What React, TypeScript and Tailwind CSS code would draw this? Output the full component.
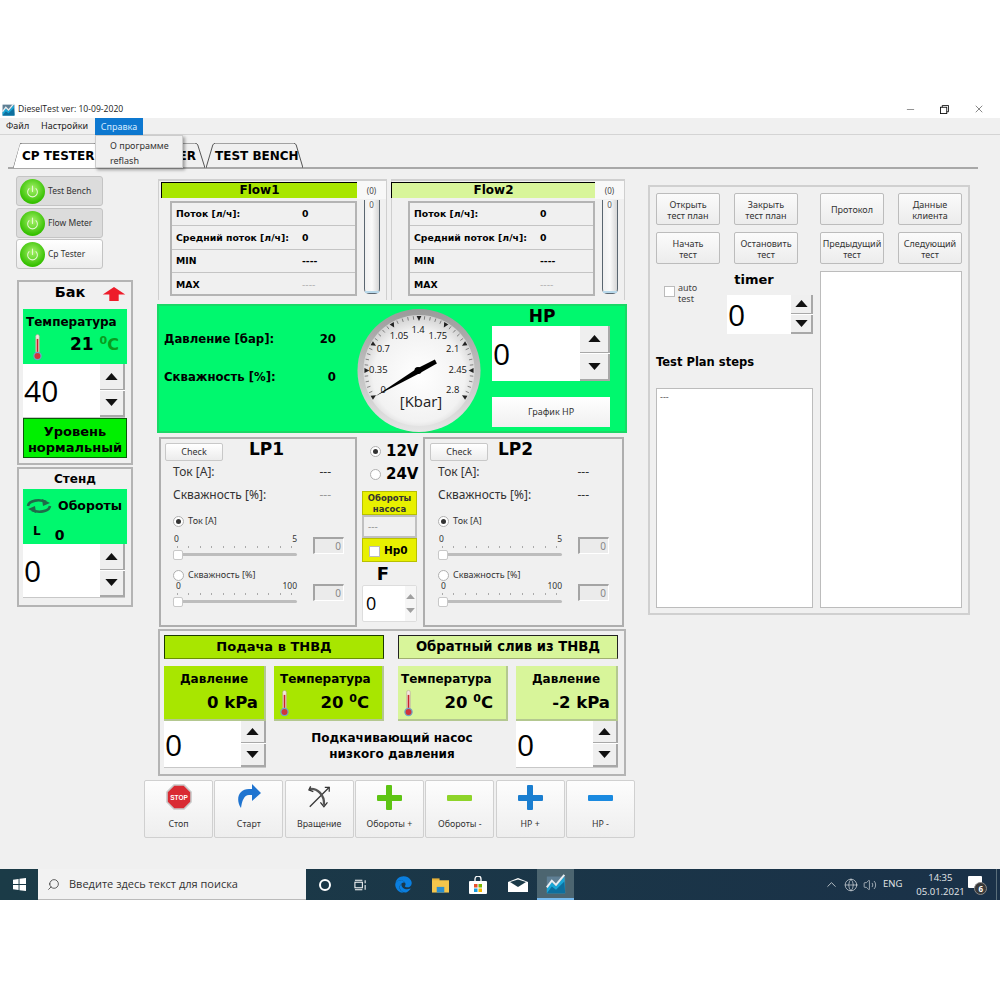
import React from "react";
import { ChevronUp, Globe, Minus, Power, Search, Volume2, X } from "lucide-react";
import { FaEdge } from "react-icons/fa";

const BOLD = "font-['DejaVu_Sans'] font-bold text-black";
const LIME = "bg-[#a8e600]";
const PALE = "bg-[#d8f59a]";
const MINT = "bg-[#00f86e]";

function ChartLogo({ className }: { className: string }) {
  return (
    <svg viewBox="0 0 24 24" className={className}>
      <rect x="1" y="3" width="22" height="20" fill="#5f7f94" />
      <path d="M1 23 L1 17 L7 10 L12 15 L22 3 L23 23 Z" fill="#19a6d6" />
      <path d="M1 23 L7 15 L12 19 L22 9 L23 23 Z" fill="#0d6f9e" />
      <path d="M1 16 L7 8 L12 13 L22 1" fill="none" stroke="#e8eef2" strokeWidth="2.4" />
    </svg>
  );
}

function Arrow({ down = false, muted = false }: { down?: boolean; muted?: boolean }) {
  return (
    <svg viewBox="0 0 14 8" className={muted ? "w-[9px] h-[5px]" : "w-[13px] h-[7px]"}>
      <polygon points={down ? "0,0 14,0 7,8" : "0,8 14,8 7,0"} fill={muted ? "#a0a0a0" : "#111"} />
    </svg>
  );
}

function Spin({ value, className, text = "text-[30px]", arrows = "w-[25px]" }: { value: string; className: string; text?: string; arrows?: string }) {
  return (
    <div className={`flex bg-white border-b border-[#c8c8c8] ${className}`}>
      <div className={`flex-1 flex items-center pl-[1px] font-['Open_Sans'] text-black ${text}`}>{value}</div>
      <div className={`${arrows} flex flex-col gap-[1px] bg-white`}>
        <div className="flex-1 flex items-center justify-center bg-[#efefef] border-r-2 border-b border-[#a8a8a8]">
          <Arrow />
        </div>
        <div className="flex-1 flex items-center justify-center bg-[#efefef] border-r-2 border-b-2 border-[#a8a8a8]">
          <Arrow down />
        </div>
      </div>
    </div>
  );
}

function Thermometer() {
  return (
    <svg viewBox="0 0 10 30" className="w-[9px] h-[28px]">
      <rect x="3" y="1" width="4" height="21" rx="2" fill="#f4e7dc" stroke="#b0a090" strokeWidth="0.6" />
      <rect x="4.1" y="6" width="1.8" height="18" fill="#c8242c" />
      <circle cx="5" cy="25" r="4" fill="#d0343c" stroke="#6ea6c8" strokeWidth="1.4" />
    </svg>
  );
}

function PowerButton({ label, active = false }: { label: string; active?: boolean }) {
  return (
    <div
      className={`w-[87px] h-[30px] flex items-center rounded-[3px] border border-[#c4c4c4] pl-[3px] gap-[3px] ${active ? "bg-linear-to-b from-white to-[#ececec]" : "bg-[#dcdcdc]"}`}
    >
      <div className="w-[25px] h-[25px] rounded-full flex items-center justify-center bg-[radial-gradient(circle_at_50%_40%,#a6f26a,#35c000_70%)]">
        <Power size={13} strokeWidth={2} className="text-[#e4f7d0]" />
      </div>
      <span className="text-[8.5px] text-[#333]">{label}</span>
    </div>
  );
}

function Tab({ label, className, pad }: { label: string; className: string; pad: string }) {
  return (
    <div className={`relative h-[25px] ${className}`}>
      <svg viewBox="0 0 100 25" preserveAspectRatio="none" className="absolute inset-0 w-full h-full">
        <path d="M0 25 L7 2 Q8 0 10 0 L90 0 Q92 0 93 2 L100 25" fill="none" stroke="#555" strokeWidth="1" vectorEffect="non-scaling-stroke" />
      </svg>
      <span className={`relative block whitespace-nowrap text-[12px] leading-[27px] ${BOLD} ${pad}`}>{label}</span>
    </div>
  );
}

function FlowRow({ label, value, muted = false }: { label: string; value: string; muted?: boolean }) {
  return (
    <div className="h-[23.4px] flex items-center border-b border-[#c4c4c4] last:border-b-0 pl-[4px] text-[9.3px]">
      <span className={`w-[126px] ${BOLD}`}>{label}</span>
      <span className={`${BOLD} ${muted ? "!text-[#aaaaaa] !font-normal" : ""}`}>{value}</span>
    </div>
  );
}

function FlowPanel({ title, color, className, barClass, indent }: { title: string; color: string; className: string; barClass: string; indent: string }) {
  return (
    <div className={`h-[121px] flex border-t-2 border-x border-[#cfcfcf] ${className}`}>
      <div className={barClass}>
        <div className={`mt-[1px] h-[16px] border-t border-l border-black text-center text-[12px] leading-[15px] ${color} ${BOLD}`}>{title}</div>
        <div className={`mt-[3px] h-[95px] border-2 border-[#b4b4b4] ${indent}`}>
          <FlowRow label="Поток [л/ч]:" value="0" />
          <FlowRow label="Средний поток [л/ч]:" value="0" />
          <FlowRow label="MIN" value="----" />
          <FlowRow label="MAX" value="----" muted />
        </div>
      </div>
      <div className="flex-1 flex flex-col items-center">
        <div className="w-full h-[18px] bg-[#f8f8f8] pt-[2px] text-center text-[8px] leading-[16px] text-[#444]">(0)</div>
        <div className="w-[16px] h-[94px] mt-[1px] flex flex-col justify-between border-x border-b border-[#5a6670] rounded-b-[5px] bg-linear-to-r from-[#f0f0f0] via-[#fafafa] to-[#d6d6d6] text-center text-[8px] leading-[10px] text-[#555]">
          <span>0</span>
          <div className="h-[2px] bg-[#b8d8ea]" />
        </div>
      </div>
    </div>
  );
}

function Gauge() {
  const labels: [string, number, number][] = [
    ["0", 29, 85],
    ["0.35", 24, 65],
    ["0.7", 29, 44],
    ["1.05", 45, 31],
    ["1.4", 64, 25],
    ["1.75", 84, 31],
    ["2.1", 99, 44],
    ["2.45", 104, 65],
    ["2.8", 99, 85],
  ];
  const ticks = [];
  for (let i = 0; i <= 40; i++) {
    const a = ((-120 + i * 6) * Math.PI) / 180;
    const major = i % 5 === 0;
    const s = Math.sin(a);
    const c = Math.cos(a);
    ticks.push(
      major ? (
        <polygon
          key={i}
          points={`${65 + s * 55 - c * 2.4},${65 - c * 55 - s * 2.4} ${65 + s * 55 + c * 2.4},${65 - c * 55 + s * 2.4} ${65 + s * 50},${65 - c * 50}`}
          fill="#222"
        />
      ) : (
        <line key={i} x1={65 + s * 55} y1={65 - c * 55} x2={65 + s * 51.5} y2={65 - c * 51.5} stroke="#555" strokeWidth="0.7" />
      ),
    );
  }
  return (
    <svg viewBox="0 0 130 130" className="w-[130px] h-[129px] shrink-0">
      <defs>
        <linearGradient id="bezel" x1="0" y1="0" x2="0" y2="1">
          <stop offset="0" stopColor="#9a9a9a" />
          <stop offset="1" stopColor="#e6e6e6" />
        </linearGradient>
        <radialGradient id="dial" cx="0.5" cy="0.55" r="0.55">
          <stop offset="0" stopColor="#ffffff" />
          <stop offset="0.75" stopColor="#f2f2f2" />
          <stop offset="1" stopColor="#cfcfcf" />
        </radialGradient>
      </defs>
      <circle cx="65" cy="65" r="62" fill="url(#bezel)" />
      <circle cx="65" cy="65" r="56" fill="url(#dial)" />
      {ticks}
      {labels.map(([t, x, y]) => (
        <text key={t} x={x} y={y} textAnchor="middle" dominantBaseline="middle" fontSize="9.5" fontFamily="'Open Sans'" fill="#111">
          {t}
        </text>
      ))}
      <text x="67" y="98" textAnchor="middle" dominantBaseline="middle" fontSize="15" fontFamily="'Open Sans'" fill="#222">
        [Kbar]
      </text>
      <polygon points="21,91 63,63 81,54 83,58 67,67" fill="#000" />
      <circle cx="64" cy="65" r="3.6" fill="#000" />
    </svg>
  );
}

function Radio({ checked = false }: { checked?: boolean }) {
  return (
    <div className="w-[11px] h-[11px] rounded-full border border-[#b0b0b0] bg-white flex items-center justify-center shrink-0">
      {checked && <div className="w-[5px] h-[5px] rounded-full bg-[#333]" />}
    </div>
  );
}

function SliderBlock({ max, zeroPad }: { max: string; zeroPad: string }) {
  return (
    <div className="flex h-[28px] text-[#333]">
      <div className="w-[124px]">
        <div className={`h-[11px] flex justify-between text-[8.5px] leading-[11px] ${zeroPad}`}>
          <span>0</span>
          <span>{max}</span>
        </div>
        <div className="h-[5px] flex justify-between pl-[4px] pr-[5px] pt-[2px]">
          {Array.from({ length: 11 }).map((_, i) => (
            <div key={i} className="w-[1px] h-[2px] bg-[#aaa]" />
          ))}
        </div>
        <div className="relative h-[11px] flex items-center">
          <div className="w-full h-[3px] rounded-full bg-[#bdbdbd]" />
          <div className="absolute left-0 w-[10px] h-[10px] rounded-[2px] bg-white border border-[#c8c8c8]" />
        </div>
      </div>
      <div className="ml-[16px] mt-[4px] w-[31px] h-[17px] bg-[#ebebeb] border-t-2 border-l-2 border-[#a4a4a4] border-r border-b border-r-white border-b-white pr-[2px] text-right text-[10px] leading-[14px] text-[#888]">
        0
      </div>
    </div>
  );
}

function LpPanel({ title, className, titleMargin, dash, dashMuted = false }: { title: string; className: string; titleMargin: string; dash: string; dashMuted?: boolean }) {
  return (
    <div className={`h-[190px] border-2 border-[#aeaeae] ${className}`}>
      <div className="flex h-[22px] items-start pt-[4px]">
        <div className="w-[58px] h-[18px] rounded-[2px] border border-[#c8c8c8] bg-linear-to-b from-white to-[#ececec] text-center text-[9px] leading-[16px] text-[#333]">Check</div>
        <span className={`text-[17px] leading-[18px] ${BOLD} -mt-[3px] ${titleMargin}`}>{title}</span>
      </div>
      <div className="ml-[8px] mt-[3px] text-[12px] leading-[16px] text-[#333]">
        <div className="flex">
          <span>Ток [А]:</span>
          <span className={`ml-auto ${dash}`}>---</span>
        </div>
        <div className="flex mt-[7px]">
          <span>Скважность [%]:</span>
          <span className={`ml-auto ${dash} ${dashMuted ? "text-[#999]" : ""}`}>---</span>
        </div>
      </div>
      <div className="ml-[8px] mt-[12px] flex flex-col">
        <div className="h-[12px] flex items-center gap-[4px] text-[9px] text-[#333]">
          <Radio checked />
          <span>Ток [А]</span>
        </div>
        <div className="mt-[6px]">
          <SliderBlock max="5" zeroPad="pl-[1px]" />
        </div>
        <div className="mt-[8px] h-[12px] flex items-center gap-[4px] text-[9px] text-[#333]">
          <Radio />
          <span>Скважность [%]</span>
        </div>
        <div className="-mt-[1px]">
          <SliderBlock max="100" zeroPad="pl-[3px]" />
        </div>
      </div>
    </div>
  );
}

function Card({ title, value, unit, color, thermo = false, titleClass = "text-center" }: { title: string; value: string; unit?: boolean; color: string; thermo?: boolean; titleClass?: string }) {
  return (
    <div className={`h-[55px] border-r-2 border-b-2 border-[#b4c890] ${color} ${thermo ? "w-[110px]" : "w-[102px]"} flex flex-col`}>
      <div className={`text-[12px] leading-[16px] pt-[5px] ${BOLD} ${titleClass}`}>{title}</div>
      <div className="flex-1 flex items-center">
        {thermo && (
          <div className="ml-[6px]">
            <Thermometer />
          </div>
        )}
        <span className={`ml-auto text-[16.5px] ${BOLD} ${thermo ? "pr-[13px]" : "pr-[6px]"}`}>
          {value}
          {unit && (
            <>
              {" "}
              <sup className="text-[11px]">0</sup>C
            </>
          )}
        </span>
      </div>
    </div>
  );
}

function PlanButton({ lines }: { lines: string[] }) {
  return (
    <div className="w-[64px] h-[32px] pt-[1px] flex flex-col items-center justify-center rounded-[2px] border border-[#bcbcbc] bg-linear-to-b from-[#fbfbfb] to-[#ececec] text-[9px] leading-[11px] text-[#333]">
      {lines.map((l) => (
        <span key={l}>{l}</span>
      ))}
    </div>
  );
}

function StopSign() {
  return (
    <svg viewBox="0 0 26 26" className="w-[26px] h-[26px]">
      <polygon points="8,1 18,1 25,8 25,18 18,25 8,25 1,18 1,8" fill="#d92b33" stroke="#c8c8c8" strokeWidth="1.6" />
      <text x="13" y="15.5" textAnchor="middle" fontSize="6.5" fontWeight="bold" fontFamily="'Liberation Sans'" fill="#fff">
        STOP
      </text>
    </svg>
  );
}

function RedoIcon() {
  return (
    <svg viewBox="0 0 26 26" className="w-[26px] h-[26px]">
      <path d="M5 24 C-1 15 3 5 13 5 L16 5 L16 0 L25 9 L16 17 L16 11 L13 11 C8 11 6 17 5 24 Z" fill="#1f74d0" />
    </svg>
  );
}

function RotationIcon() {
  return (
    <svg viewBox="0 0 26 26" className="w-[23px] h-[24px]" fill="none" stroke="#333" strokeWidth="1.4">
      <path d="M2 24 L24 2" />
      <path d="M2 4 C10 3 19 10 18 22" strokeWidth="2.6" stroke="#555" />
      <path d="M3 1 L1 5 L6 7" />
      <path d="M14 19 L18 24 L22 19" />
      <path d="M19 2 L24 2 L24 7" />
    </svg>
  );
}

function ToolButton({ label, icon }: { label: string; icon: React.ReactNode }) {
  return (
    <div className="w-[69px] h-[58px] shrink-0 flex flex-col items-center rounded-[2px] border border-[#d0d0d0] bg-linear-to-b from-[#fdfdfd] to-[#eeeeee]">
      <div className="h-[26px] mt-[3px] flex items-center justify-center">{icon}</div>
      <span className="mt-[8px] text-[8.8px] leading-[12px] text-[#333]">{label}</span>
    </div>
  );
}

function Sign({ color, plus = false }: { color: string; plus?: boolean }) {
  return (
    <div className="relative w-[25px] h-[25px]">
      <div className={`absolute left-0 top-[10px] w-[25px] h-[6px] rounded-[1px] ${color}`} />
      {plus && <div className={`absolute left-[9.5px] top-0 w-[6px] h-[25px] rounded-[1px] ${color}`} />}
    </div>
  );
}

function StandRotate() {
  return (
    <svg viewBox="0 0 26 16" className="w-[26px] h-[16px]" fill="none" stroke="#1f6b4a" strokeWidth="2.6">
      <path d="M2 8 C3 2 14 1 20 4" />
      <path d="M24 8 C23 14 12 15 6 12" />
      <path d="M16 1 L24 5 L17 8 Z" fill="#1f6b4a" stroke="none" />
      <path d="M10 15 L2 11 L9 8 Z" fill="#1f6b4a" stroke="none" />
    </svg>
  );
}

function Taskbar() {
  return (
    <div className="h-[31px] flex items-stretch bg-linear-to-r from-[#1b3b47] to-[#1a3148] text-[#e4e8ea]">
      <div className="w-[38px] flex items-center justify-center">
        <svg viewBox="0 0 14 14" className="w-[13px] h-[13px]" fill="#fff">
          <polygon points="0,2 6,1 6,6.5 0,6.5" />
          <polygon points="7,0.8 14,0 14,6.5 7,6.5" />
          <polygon points="0,7.5 6,7.5 6,13 0,12" />
          <polygon points="7,7.5 14,7.5 14,14 7,13.2" />
        </svg>
      </div>
      <div className="w-[268px] flex items-center bg-[#f2f2f2] border-b border-[#bbb] pl-[9px] text-[11px] text-[#333]">
        <Search size={13} strokeWidth={1.3} className="-scale-x-100 text-[#222]" />
        <span className="ml-[9px] font-['Open_Sans']">Введите здесь текст для поиска</span>
      </div>
      <div className="w-[231px] flex items-center">
        <div className="ml-[13px] w-[12px] h-[12px] rounded-full border-2 border-white" />
        <svg viewBox="0 0 14 12" className="ml-[23px] w-[13px] h-[12px]" fill="none" stroke="#fff" strokeWidth="1.1">
          <rect x="1" y="3" width="8" height="6" />
          <path d="M1 1 H9 M1 11 H9 M12 1 V4 M12 6 V11" />
        </svg>
        <FaEdge className="ml-[28px] w-[17px] h-[17px] text-[#0a7fe0]" />
        <svg viewBox="0 0 18 16" className="ml-[20px] w-[17px] h-[16px]">
          <rect x="0" y="1" width="8" height="3" fill="#e8b33a" />
          <rect x="0" y="3" width="18" height="13" fill="#f4c64c" />
          <rect x="5" y="10" width="8" height="6" fill="#2b8fd0" />
        </svg>
        <svg viewBox="0 0 18 18" className="ml-[20px] w-[18px] h-[18px]">
          <path d="M6 5 V3 A3 3 0 0 1 12 3 V5" fill="none" stroke="#fff" strokeWidth="1.3" />
          <rect x="0" y="5" width="18" height="13" rx="1" fill="#fff" />
          <rect x="5" y="8" width="3.5" height="3.5" fill="#e8502a" />
          <rect x="9.5" y="8" width="3.5" height="3.5" fill="#7db900" />
          <rect x="5" y="12.5" width="3.5" height="3.5" fill="#1a9fe0" />
          <rect x="9.5" y="12.5" width="3.5" height="3.5" fill="#f9b800" />
        </svg>
        <svg viewBox="0 0 20 14" className="ml-[21px] w-[20px] h-[14px]">
          <polygon points="0,4 10,0 20,4 20,14 0,14" fill="#fff" />
          <polygon points="2,4 10,1.5 18,4 10,9" fill="#1b3a48" />
        </svg>
      </div>
      <div className="w-[37px] flex items-center justify-center bg-[#4c6570] border-b-2 border-[#76b9ed]">
        <ChartLogo className="w-[20px] h-[20px]" />
      </div>
      <div className="flex-1 flex items-center font-['Open_Sans']">
        <ChevronUp size={15} strokeWidth={1.2} className="ml-[250px]" />
        <Globe size={14} strokeWidth={1.1} className="ml-[5px]" />
        <Volume2 size={14} strokeWidth={1.1} className="ml-[5px]" />
        <span className="ml-[6px] text-[9.5px]">ENG</span>
        <div className="ml-[14px] w-[48px] text-center text-[9.5px] leading-[14px]">
          <div>14:35</div>
          <div>05.01.2021</div>
        </div>
        <div className="relative ml-[4px] w-[14px] h-[12px] bg-white -mt-[6px] rounded-[1px]">
          <div className="absolute -right-[5px] -bottom-[7px] w-[13px] h-[13px] rounded-full bg-[#3a3a3a] border border-[#888] text-center text-[8px] leading-[11px] font-bold text-white">6</div>
        </div>
      </div>
      <div className="w-[4px] border-l border-[#5a6e7a]" />
    </div>
  );
}

export default function App() {
  return (
    <div className="w-[1000px] h-[1000px] bg-white pt-[100px] font-['Noto_Sans'] overflow-hidden">
      <div className="relative h-[769px] bg-[#f0f0f0] flex flex-col">
        {/* title bar */}
        <div className="h-[18px] bg-white flex items-center pl-[2px] text-[8.6px] text-[#222] shrink-0">
          <ChartLogo className="w-[13px] h-[13px]" />
          <span className="ml-[3px] font-['Open_Sans']">DieselTest ver: 10-09-2020</span>
          <div className="ml-auto flex items-center text-[#111]">
            <Minus size={11} strokeWidth={1} className="mr-[24px]" />
            <svg viewBox="0 0 10 10" className="mr-[24px] w-[9px] h-[9px]" fill="none" stroke="#111" strokeWidth="1">
              <rect x="0.5" y="2.5" width="7" height="7" />
              <path d="M2.5 2.5 V0.5 H9.5 V7.5 H7.5" />
            </svg>
            <X size={12} strokeWidth={1} className="mr-[15px]" />
          </div>
        </div>

        {/* menu */}
        <div className="relative h-[17px] flex items-center pl-[6px] text-[9px] text-[#222] bg-[#f0f0f0] border-b border-[#d4d4d4] shrink-0">
          <span className="w-[35px]">Файл</span>
          <span className="w-[54px]">Настройки</span>
          <span className="h-[17px] w-[48px] bg-[#0d78d0] text-[#d8ecff] text-center leading-[17px]">Справка</span>
          <div className="absolute left-[95px] top-[17px] z-10 w-[88px] h-[33px] bg-[#f0f0f0] border border-[#ccc] shadow-[2px_2px_3px_rgba(0,0,0,0.35)] pl-[14px] pt-[2px] text-[9px] leading-[15px] text-[#333]">
            <div>О программе</div>
            <div>reflash</div>
          </div>
        </div>

        {/* tabs */}
        <div className="h-[33px] pt-[8px] pl-[13px] shrink-0">
          <div className="flex h-[26px] border-b-2 border-[#a8a8a8] -ml-[5px] pl-[5px] mr-[22px]">
            <Tab label="CP TESTER" className="w-[90px] bg-white [clip-path:polygon(0_100%,8%_0,92%_0,100%_100%)]" pad="pl-[9px]" />
            <Tab label="ER" className="w-[103px] -ml-[1px]" pad="text-right pr-[9px]" />
            <Tab label="TEST BENCH" className="w-[97px] ml-[1px]" pad="pl-[9px]" />
          </div>
        </div>

        <div className="flex flex-1">
          {/* left column */}
          <div className="w-[141px] ml-[16px] pt-[8px] flex flex-col shrink-0">
            <PowerButton label="Test Bench" />
            <div className="h-[2px]" />
            <PowerButton label="Flow Meter" />
            <div className="h-[1px]" />
            <PowerButton label="Cp Tester" active />

            <div className="ml-[1px] mt-[11px] w-[116px] h-[185px] border-2 border-[#b4b4b4] px-[4px]">
              <div className={`relative h-[27px] pr-[10px] text-center text-[14.5px] leading-[20px] ${BOLD}`}>
                Бак
                <svg viewBox="0 0 24 16" className="absolute right-[1px] top-[5px] w-[24px] h-[15px]">
                  <polygon points="12,0 24,8 17,8 17,15 7,15 7,8 0,8" fill="#ee1c2a" />
                </svg>
              </div>
              <div className={`h-[55px] ${MINT}`}>
                <div className={`pl-[3px] pt-[5px] text-[12px] leading-[16px] ${BOLD}`}>Температура</div>
                <div className="flex items-center pl-[10px] pt-[3px]">
                  <Thermometer />
                  <span className={`ml-auto pr-[8px] -mt-[5px] text-[17px] ${BOLD}`}>
                    21 <sup className="text-[11px] !text-[#0a9b1e]">0</sup>
                    <span className="!text-[#0a9b1e] text-[16px]">C</span>
                  </span>
                </div>
              </div>
              <Spin value="40" className="h-[54px] w-[102px]" />
              <div className={`h-[40px] bg-[#00f000] border border-[#0a5a0a] text-center text-[13px] leading-[16px] pt-[5px] ${BOLD}`}>
                Уровень
                <br />
                нормальный
              </div>
            </div>

            <div className="ml-[1px] mt-[2px] w-[116px] h-[140px] border-2 border-[#b4b4b4] px-[4px]">
              <div className={`h-[20px] text-center text-[12px] leading-[20px] ${BOLD}`}>Стенд</div>
              <div className={`h-[55px] ${MINT} flex flex-col`}>
                <div className="flex items-center pl-[3px] pt-[8px] gap-[6px]">
                  <StandRotate />
                  <span className={`text-[12.5px] ${BOLD}`}>Обороты</span>
                </div>
                <div className="flex items-center pl-[10px] pt-[1px]">
                  <span className={`text-[12px] ${BOLD}`}>L</span>
                  <span className={`ml-[14px] mt-[8px] text-[14px] ${BOLD}`}>0</span>
                </div>
              </div>
              <Spin value="0" className="h-[54px] w-[102px]" />
            </div>
          </div>

          {/* middle column */}
          <div className="w-[470px] pt-[11px] flex flex-col shrink-0">
            <div className="flex gap-[4px] pl-[1px]">
              <FlowPanel title="Flow1" color={LIME} className="w-[229px]" barClass="w-[198px] pl-[2px]" indent="ml-[9px]" />
              <FlowPanel title="Flow2" color={PALE} className="w-[234px]" barClass="w-[204px] -ml-[1px]" indent="ml-[17px]" />
            </div>

            <div className={`mt-[4px] h-[129px] flex border-2 border-[#19d866] ${MINT}`}>
              <div className={`w-[195px] pl-[5px] pr-[18px] text-[11.7px] ${BOLD}`}>
                <div className="mt-[25px] flex justify-between">
                  <span>Давление [бар]:</span>
                  <span>20</span>
                </div>
                <div className="mt-[20px] flex justify-between">
                  <span>Скважность [%]:</span>
                  <span>0</span>
                </div>
              </div>
              <Gauge />
              <div className="ml-[8px] w-[118px]">
                <div className={`h-[20px] pr-[18px] text-center text-[17px] leading-[20px] ${BOLD}`}>HP</div>
                <Spin value="0" arrows="w-[30px]" className="h-[55px] w-[118px] !border-b-0" />
                <div className="mt-[16px] h-[30px] bg-linear-to-b from-white to-[#f0f0f0] text-center text-[9px] leading-[30px] text-[#333]">График HP</div>
              </div>
            </div>

            <div className="mt-[4px] flex pl-[2px]">
              <LpPanel title="LP1" className="w-[198px] pl-[4px]" titleMargin="ml-[26px]" dash="mr-[24px]" dashMuted />
              <div className="w-[67px] pl-[5px] flex flex-col shrink-0">
                <div className="h-[46px] pt-[3px]">
                  <div className="flex items-center h-[23px] pl-[8px] gap-[5px]">
                    <Radio checked />
                    <span className={`text-[15px] ${BOLD}`}>12V</span>
                  </div>
                  <div className="flex items-center h-[23px] pl-[8px] gap-[5px]">
                    <Radio />
                    <span className={`text-[15px] ${BOLD}`}>24V</span>
                  </div>
                </div>
                <div className="mt-[8px] w-[55px] h-[24px] bg-[#e8f000] border border-[#b8c000] text-center text-[8.5px] leading-[11px] pt-[1px] font-['DejaVu_Sans'] font-bold text-[#333]">
                  Обороты
                  <br />
                  насоса
                </div>
                <div className="w-[55px] h-[23px] bg-[#f0f0f0] border-2 border-[#c0c0c0] pl-[4px] text-[10px] leading-[19px] text-[#999]">---</div>
                <div className="w-[55px] h-[24px] bg-[#e8f000] border border-[#b8c000] flex items-center pl-[6px] gap-[4px] pt-[2px]">
                  <div className="w-[11px] h-[11px] bg-white border border-[#bbb]" />
                  <span className={`text-[10.5px] ${BOLD}`}>Hp0</span>
                </div>
                <div className={`w-[42px] text-center text-[18px] leading-[22px] mt-[1px] ${BOLD}`}>F</div>
                <div className="flex w-[55px] h-[37px] bg-white border border-[#ddd] rounded-[2px]">
                  <div className="flex-1 pl-[3px] text-[18px] leading-[35px] font-['Open_Sans'] text-black">0</div>
                  <div className="w-[11px] flex flex-col items-center justify-between py-[8px] bg-[#f6f6f6]">
                    <Arrow muted />
                    <Arrow down muted />
                  </div>
                </div>
              </div>
              <LpPanel title="LP2" className="w-[201px] -ml-[1px] pl-[5px]" titleMargin="ml-[10px]" dash="mr-[33px]" />
            </div>

            <div className="mt-[2px] h-[147px] ml-[1px] w-[468px] border-2 border-[#b4b4b4] px-[4px] pt-[4px]">
              <div className="flex justify-between pr-[2px]">
                <div className={`w-[220px] h-[24px] ${LIME} border border-[#1a3a00] border-b-[#6a9000] text-center text-[13px] leading-[22px] ${BOLD}`}>Подача в ТНВД</div>
                <div className={`w-[220px] h-[24px] ${PALE} border border-[#222] border-b-[#a0b070] text-center text-[13.2px] leading-[22px] ${BOLD}`}>Обратный слив из ТНВД</div>
              </div>
              <div className="flex mt-[7px] items-start">
                <div className="w-[102px]">
                  <Card title="Давление" value="0 kPa" color={LIME} />
                  <Spin value="0" className="h-[47px] w-[102px]" />
                </div>
                <div className="ml-[8px]">
                  <Card title="Температура" value="20" unit color={LIME} thermo titleClass="pl-[6px]" />
                </div>
                <div className="ml-[14px]">
                  <Card title="Температура" value="20" unit color={PALE} thermo titleClass="pl-[3px]" />
                </div>
                <div className="ml-[8px] w-[102px]">
                  <Card title="Давление" value="-2 kPa" color={PALE} />
                  <Spin value="0" className="h-[47px] w-[102px]" />
                </div>
              </div>
              <div className={`-mt-[38px] text-center text-[12px] leading-[16px] ${BOLD}`}>
                Подкачивающий насос
                <br />
                низкого давления
              </div>
            </div>

            <div className="-ml-[13px] mt-[4px] w-[491px] flex justify-between">
              <ToolButton label="Стоп" icon={<StopSign />} />
              <ToolButton label="Старт" icon={<RedoIcon />} />
              <ToolButton label="Вращение" icon={<RotationIcon />} />
              <ToolButton label="Обороты +" icon={<Sign plus color="bg-[#5ec414]" />} />
              <ToolButton label="Обороты -" icon={<Sign color="bg-[#8ed42a]" />} />
              <ToolButton label="HP +" icon={<Sign plus color="bg-[#1a7ed0]" />} />
              <ToolButton label="HP -" icon={<Sign color="bg-[#1a8ae0]" />} />
            </div>
          </div>

          {/* right panel */}
          <div className="ml-[21px] mt-[17px] w-[322px] h-[430px] border-2 border-[#d0d0d0] pl-[6px] pt-[6px] flex">
            <div className="w-[157px]">
              <div className="grid grid-cols-[64px_64px] gap-x-[14px] gap-y-[7px]">
                <PlanButton lines={["Открыть", "тест план"]} />
                <PlanButton lines={["Закрыть", "тест план"]} />
                <PlanButton lines={["Начать", "тест"]} />
                <PlanButton lines={["Остановить", "тест"]} />
              </div>
              <div className="flex h-[70px]">
                <div className="w-[71px] flex pl-[8px] pt-[22px]">
                  <div className="w-[11px] h-[11px] bg-white border border-[#bbb]" />
                  <span className="ml-[3px] -mt-[4px] text-[9px] leading-[11px] text-[#444]">
                    auto
                    <br />
                    test
                  </span>
                </div>
                <div className="w-[86px]">
                  <div className={`h-[31px] pt-[8px] pr-[32px] text-center text-[13px] leading-[16px] ${BOLD}`}>timer</div>
                  <Spin value="0" arrows="w-[22px]" className="h-[39px] w-[86px] !border-b-0" />
                </div>
              </div>
              <div className={`mt-[20px] h-[16px] text-[11.5px] leading-[16px] ${BOLD}`}>Test Plan steps</div>
              <div className="mt-[18px] h-[220px] bg-white border border-[#bcbcbc] pl-[3px] pt-[1px] text-[9px] leading-[14px] text-[#555]">---</div>
            </div>
            <div className="ml-[7px] w-[142px] flex flex-col">
              <div className="grid grid-cols-[64px_64px] gap-x-[14px] gap-y-[7px]">
                <PlanButton lines={["Протокол"]} />
                <PlanButton lines={["Данные", "клиента"]} />
                <PlanButton lines={["Предыдущий", "тест"]} />
                <PlanButton lines={["Следующий", "тест"]} />
              </div>
              <div className="mt-[7px] h-[337px] bg-white border border-[#bcbcbc]" />
            </div>
          </div>
        </div>
      </div>
      <Taskbar />
    </div>
  );
}
